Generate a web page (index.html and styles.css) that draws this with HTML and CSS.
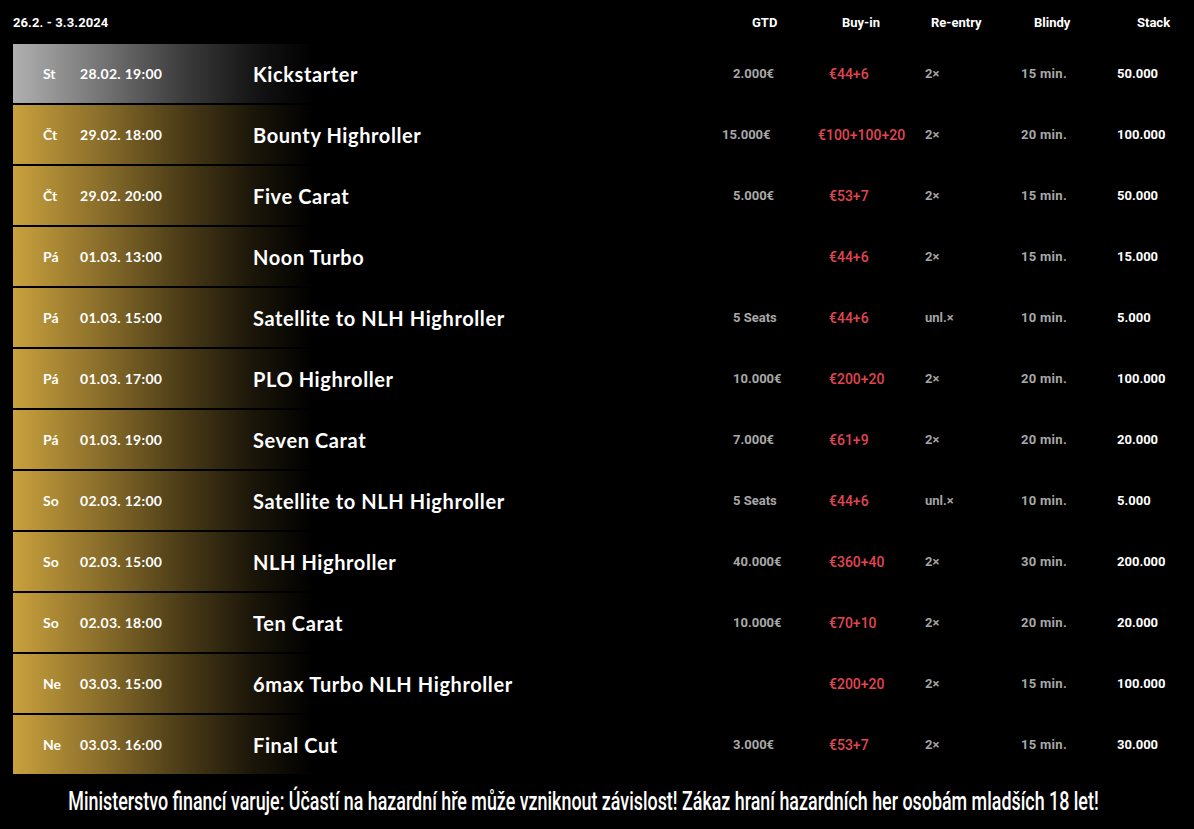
FILE: index.html
```html
<!DOCTYPE html>
<html lang="cs">
<head>
<meta charset="utf-8">
<title>Turnaje 26.2. - 3.3.2024</title>
<link rel="stylesheet" href="styles.css">
</head>
<body>
<div class="page">
  <div class="head">
    <div class="range">26.2. - 3.3.2024</div>
    <div class="h">GTD</div>
    <div class="h">Buy-in</div>
    <div class="h">Re-entry</div>
    <div class="h">Blindy</div>
    <div class="h">Stack</div>
  </div>
  <div class="rows">
    <div class="row silver"><div class="day">St</div><div class="date">28.02. 19:00</div><div class="name">Kickstarter</div><div class="gtd">2.000€</div><div class="buy">€44+6</div><div class="re">2×</div><div class="bl">15 min.</div><div class="st">50.000</div></div>
    <div class="row wide"><div class="day">Čt</div><div class="date">29.02. 18:00</div><div class="name">Bounty Highroller</div><div class="gtd">15.000€</div><div class="buy">€100+100+20</div><div class="re">2×</div><div class="bl">20 min.</div><div class="st">100.000</div></div>
    <div class="row"><div class="day">Čt</div><div class="date">29.02. 20:00</div><div class="name">Five Carat</div><div class="gtd">5.000€</div><div class="buy">€53+7</div><div class="re">2×</div><div class="bl">15 min.</div><div class="st">50.000</div></div>
    <div class="row"><div class="day">Pá</div><div class="date">01.03. 13:00</div><div class="name">Noon Turbo</div><div class="gtd"></div><div class="buy">€44+6</div><div class="re">2×</div><div class="bl">15 min.</div><div class="st">15.000</div></div>
    <div class="row"><div class="day">Pá</div><div class="date">01.03. 15:00</div><div class="name">Satellite to NLH Highroller</div><div class="gtd">5 Seats</div><div class="buy">€44+6</div><div class="re">unl.×</div><div class="bl">10 min.</div><div class="st">5.000</div></div>
    <div class="row"><div class="day">Pá</div><div class="date">01.03. 17:00</div><div class="name">PLO Highroller</div><div class="gtd">10.000€</div><div class="buy">€200+20</div><div class="re">2×</div><div class="bl">20 min.</div><div class="st">100.000</div></div>
    <div class="row"><div class="day">Pá</div><div class="date">01.03. 19:00</div><div class="name">Seven Carat</div><div class="gtd">7.000€</div><div class="buy">€61+9</div><div class="re">2×</div><div class="bl">20 min.</div><div class="st">20.000</div></div>
    <div class="row"><div class="day">So</div><div class="date">02.03. 12:00</div><div class="name">Satellite to NLH Highroller</div><div class="gtd">5 Seats</div><div class="buy">€44+6</div><div class="re">unl.×</div><div class="bl">10 min.</div><div class="st">5.000</div></div>
    <div class="row"><div class="day">So</div><div class="date">02.03. 15:00</div><div class="name">NLH Highroller</div><div class="gtd">40.000€</div><div class="buy">€360+40</div><div class="re">2×</div><div class="bl">30 min.</div><div class="st">200.000</div></div>
    <div class="row"><div class="day">So</div><div class="date">02.03. 18:00</div><div class="name">Ten Carat</div><div class="gtd">10.000€</div><div class="buy">€70+10</div><div class="re">2×</div><div class="bl">20 min.</div><div class="st">20.000</div></div>
    <div class="row"><div class="day">Ne</div><div class="date">03.03. 15:00</div><div class="name">6max Turbo NLH Highroller</div><div class="gtd"></div><div class="buy">€200+20</div><div class="re">2×</div><div class="bl">15 min.</div><div class="st">100.000</div></div>
    <div class="row"><div class="day">Ne</div><div class="date">03.03. 16:00</div><div class="name">Final Cut</div><div class="gtd">3.000€</div><div class="buy">€53+7</div><div class="re">2×</div><div class="bl">15 min.</div><div class="st">30.000</div></div>
  </div>
  <div class="warn"><span class="warn-text">Ministerstvo financí varuje: Účastí na hazardní hře může vzniknout závislost! Zákaz hraní hazardních her osobám mladších 18 let!</span></div>
</div>
</body>
</html>
```

FILE: styles.css
```css
* { box-sizing: border-box; }
html, body { margin: 0; padding: 0; background: #000; }
body {
  color: #fff;
  font-family: Lato, "Noto Sans", sans-serif;
  font-weight: 700;
  width: 1194px;
  height: 829px;
  overflow: hidden;
}
.page { padding: 0 13px; }

.head {
  height: 44px;
  display: grid;
  grid-template-columns: 739px 90px 89px 103px 103px 1fr;
  align-items: center;
  font-size: 13px;
  font-family: Roboto, sans-serif;
  font-weight: 700;
}
.range { letter-spacing: 0.1px; }

.rows { display: flex; flex-direction: column; gap: 2px; }
.row {
  height: 59px;
  display: grid;
  grid-template-columns: 67px 173px 480px 96px 96px 96px 96px 1fr;
  align-items: center;
  background: linear-gradient(90deg, #c9a13d 0, #8f722c 80px, #4a3b17 170px, #1b1609 240px, #000 300px);
}
.row.silver {
  background: linear-gradient(90deg, #b0b0b0 0, #7a7a7a 80px, #3c3c3c 170px, #151515 240px, #000 300px);
}
.day { padding-left: 30px; font-size: 14px; }
.date { font-size: 14px; letter-spacing: 0.3px; }
.name { font-size: 20px; letter-spacing: 0.6px; }
.gtd, .re, .bl, .st { font-family: Roboto, sans-serif; font-size: 13px; }
.gtd { color: #a8a8a8; }
.buy { font-family: Roboto, sans-serif; font-size: 14px; color: #e04652; font-weight: 500; }
.re { color: #a4a4a4; }
.bl { color: #a8a8a8; letter-spacing: 0.3px; }
.st { color: #fff; }
.row.wide .gtd { margin-left: -11px; }
.row.wide .buy { margin-left: -11px; }

.warn {
  height: 54px;
  display: flex;
  align-items: center;
  justify-content: center;
  padding-right: 28px;
  white-space: nowrap;
}
.warn-text {
  display: inline-block;
  font-family: Roboto, sans-serif;
  font-size: 25px;
  font-weight: 500;
  transform: scaleX(0.715);
}
```
